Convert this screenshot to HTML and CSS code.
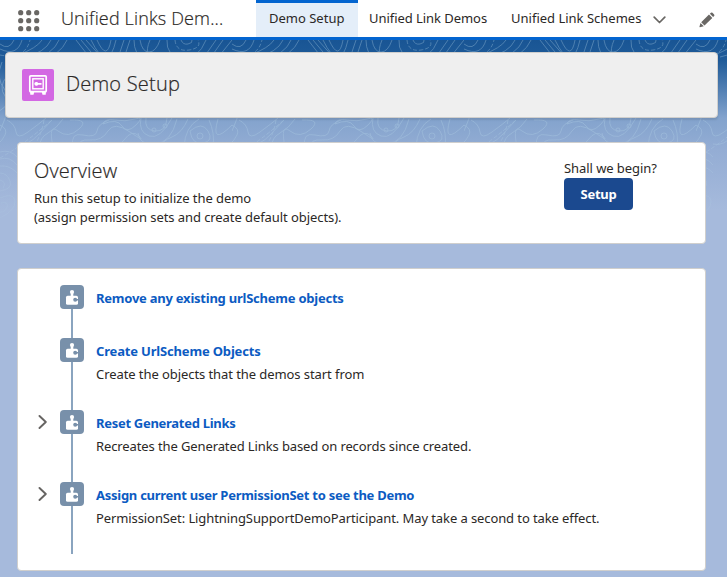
FILE: index.html
```html
<!DOCTYPE html>
<html lang="en">
<head>
<meta charset="utf-8">
<title>Demo Setup</title>
<link rel="stylesheet" href="styles.css">
</head>
<body>
<svg width="0" height="0" class="defs" aria-hidden="true">
  <symbol id="puzzle" viewBox="0 0 24 24"><rect x="6" y="10.800" width="12" height="9" rx="1.600" fill="#fff"/><path fill="#fff" d="M10.700 8h2.600v4h-2.600z"/><circle cx="12" cy="7" r="2.100" fill="#fff"/><circle cx="15.200" cy="14.700" r="2" fill="#7890aa"/><path fill="#7890aa" d="M15.500 13.900H19v1.700h-3.500z"/></symbol>
  <symbol id="chevron" viewBox="0 0 10 14"><path d="M1.500 1l6.300 6-6.300 6" fill="none" stroke="#666462" stroke-width="1.900" stroke-linecap="round" stroke-linejoin="round"/></symbol>
</svg>
<header class="nav">
  <svg class="launcher" width="22" height="22" viewBox="0 0 22 22" fill="#696764"><circle cx="2.700" cy="2.700" r="2.600"/><circle cx="10.700" cy="2.700" r="2.600"/><circle cx="18.700" cy="2.700" r="2.600"/><circle cx="2.700" cy="10.700" r="2.600"/><circle cx="10.700" cy="10.700" r="2.600"/><circle cx="18.700" cy="10.700" r="2.600"/><circle cx="2.700" cy="18.700" r="2.600"/><circle cx="10.700" cy="18.700" r="2.600"/><circle cx="18.700" cy="18.700" r="2.600"/></svg>
  <div class="app-name"><span class="t-app">Unified Links Dem...</span></div>
  <a class="tab tab-active"><span>Demo Setup</span></a>
  <a class="tab tab-demos"><span class="t-tab">Unified Link Demos</span></a>
  <a class="tab tab-schemes"><span>Unified Link Schemes</span></a>
  <svg class="more" width="13" height="8" viewBox="0 0 13 8"><path d="M1.200 1.200l5.300 5.300 5.300-5.300" fill="none" stroke="#696764" stroke-width="1.700" stroke-linecap="round" stroke-linejoin="round"/></svg>
  <svg class="edit" width="16" height="16" viewBox="0 0 16 16" fill="#696764"><path d="M2.200 10.300L10 2.600l3.300 3.300-7.800 7.700zM10.900 1.800l1-1q.8-.7 1.600 0l1.600 1.600q.8.800 0 1.600l-1 1zM1.500 11l3.300 3.300L.9 15.200q-.6 0-.4-.7z"/></svg>
</header>
<main class="page">
  <svg class="topo" width="727" height="189" aria-hidden="true">
    <defs>
      <pattern id="contours" width="232" height="190" patternUnits="userSpaceOnUse">
        <g fill="none" stroke="#b9d8ea" stroke-width=".9">
          <path d="M0 4q9 7 14-4M0 9q17 8 22-9M18 15Q37 8 42 0M24 17Q45 13 51 0M31 19Q53 15 59 0M39 20Q60 16 67 0"/>
          <path stroke-dasharray="4 2" d="M0 15q25 5 30-15M175 0q1 12 14 10t9-10"/>
          <path d="M76 0l14 18M81 0l15 18M86 0l16 18M91 0q17 35 25 0M97 0q10 22 14 0M118 18l6-18M124 18l6-18"/>
          <path d="M134 0q0 15 10 18M140 0q2 12 9 12t11-12M150 0q-8 19 8 18M167 0q-1 16 15 18t24-18M181 0q2 5 7 4t4-4M202 20l14-20M209 20l14-20M216 20l16-20"/>
          <path d="M2 22q-7 16 3 28t-7 22M7 36q-9 11-2 20T0 91"/>
          <path d="M0 85q8 4 5 10T-2 104M7 80q8 4 9 12t12 0 18-14M17 104q10 3 22-10t13-14"/>
          <path stroke-dasharray="4 2" d="M44 80q-2 14-10 26M0 118q22-12 52-38"/>
          <path d="M63 79q-6 9-15 14t-8 14M70 80q20-1 9 9T58 91t-5 16M73 107q-3-15 10-12t14-4 12-11M78 107q0-8 12-7t18-9 22 1 9 4-15 4-16 7"/>
          <path d="M103 84q2-6 12-4t20-1 1 6-14 1-19-2zM141 78q-3 14 8 18t23-18M146 78q-2 12 9 13t12-13M138 93q1 12 17 11t22-25"/>
          <circle cx="154" cy="90" r="2"/><circle cx="165" cy="86" r="2"/><circle cx="200" cy="96" r="3"/>
          <path d="M188 79q-6 14-16 18t-12 10M199 79q-14 8-15 28M190 91q12-10 18 0t-5 12-13-12M209 80q6 13 4 27M218 79q-8 28 14 6"/>
          <path d="M232 22q-18 9-16 24t20 16M228 29q-8 6-6 15t10 11"/>
          <path d="M0 112q10-3 17 5M0 119q10-3 17 6M0 126q10-1 17 7M0 133q7 0 10 8T0 151M0 140q7 2 3 8M0 158q14-6 15 3T0 178M1 163q8-2 6 4t-7 5M232 128q-26-10-27 8t27 10M232 134q-18-7-20 2t20 3M232 157q-19-8-21 4t21 17"/>
        </g>
      </pattern>
      <linearGradient id="fade" x1="0" y1="0" x2="0" y2="1"><stop offset=".4" stop-color="#fff" stop-opacity=".36"/><stop offset="1" stop-color="#fff" stop-opacity=".1"/></linearGradient>
      <mask id="faded"><rect width="727" height="189" fill="url(#fade)"/></mask>
    </defs>
    <rect width="727" height="189" fill="url(#contours)" mask="url(#faded)"/>
  </svg>
  <section class="card page-header">
    <svg class="safe" width="32" height="32" viewBox="0 0 32 32"><rect width="32" height="32" rx="2" fill="#d368e3"/><rect x="7.800" y="6.800" width="16.400" height="15.900" rx="1" fill="none" stroke="#fff" stroke-width="1.700"/><path fill="#fff" d="M8 22h4.500l-1 3.700H8.300zM19.500 22H24l-.3 3.700h-3.200z"/><rect x="10.800" y="9.800" width="10.400" height="10" fill="none" stroke="#fff" stroke-width="1.400"/><path fill="#fff" d="M12.300 14.800a2.100 2.100 0 0 1 3.900-.8h3.300v1.700h-3.300a2.100 2.100 0 0 1-3.900-.9z"/></svg>
    <h1 class="title"><span class="t-title">Demo Setup</span></h1>
  </section>
  <section class="card overview">
    <div class="overview-text">
      <h2 class="heading"><span class="t-over">Overview</span></h2>
      <p><span class="t-run">Run this setup to initialize the demo</span><br><span class="t-assign">(assign permission sets and create default objects).</span></p>
    </div>
    <div class="begin"><span class="t-shall">Shall we begin?</span><button class="button"><span class="t-btn">Setup</span></button></div>
  </section>
  <section class="card steps">
    <div class="step short">
      <span class="toggle"></span>
      <div class="rail"><svg class="icon"><use href="#puzzle"/></svg></div>
      <div class="body"><a class="t-s1">Remove any existing urlScheme objects</a></div>
    </div>
    <div class="step">
      <span class="toggle"></span>
      <div class="rail"><svg class="icon"><use href="#puzzle"/></svg></div>
      <div class="body"><a class="t-s2">Create UrlScheme Objects</a><p><span class="t-d2">Create the objects that the demos start from</span></p></div>
    </div>
    <div class="step">
      <span class="toggle"><svg width="10" height="14"><use href="#chevron"/></svg></span>
      <div class="rail"><svg class="icon"><use href="#puzzle"/></svg></div>
      <div class="body"><a class="t-s3">Reset Generated Links</a><p><span class="t-d3">Recreates the Generated Links based on records since created.</span></p></div>
    </div>
    <div class="step">
      <span class="toggle"><svg width="10" height="14"><use href="#chevron"/></svg></span>
      <div class="rail"><svg class="icon"><use href="#puzzle"/></svg></div>
      <div class="body"><a class="t-s4">Assign current user PermissionSet to see the Demo</a><p><span class="t-d4">PermissionSet: LightningSupportDemoParticipant. May take a second to take effect.</span></p></div>
    </div>
  </section>
</main>
</body>
</html>
```
FILE: styles.css
```css
* { box-sizing: border-box; }
body { margin: 0; height: 577px; overflow: hidden; font: 13px/19px "Noto Sans", sans-serif; color: #2b2826; background: #a6badc; }
p, h1, h2 { margin: 0; font-weight: 400; }
span, a { white-space: nowrap; }
.defs { position: absolute; }
.nav { height: 40px; display: flex; background: #fff; border-bottom: 3px solid #0365d0; }
.launcher { margin: 10px 0 0 18px; flex: none; }
.app-name { width: 195px; margin-left: 21px; font: 300 18px/37px "Open Sans", sans-serif; -webkit-text-stroke: .2px; }
.tab { height: 37px; line-height: 37px; flex: none; }
.tab-active { width: 102px; padding-left: 13px; background: #e4eef9; border-top: 3px solid #0365d0; line-height: 31px; }
.tab-demos { width: 142px; padding-left: 11px; }
.tab-schemes { width: 153px; padding-left: 11px; }
.more { margin-top: 16px; flex: none; }
.edit { margin: 12px 0 0 33px; flex: none; }
.page { position: relative; height: 537px; padding: 12px 9px 0 5px; background: linear-gradient(#195594 0, #1f5b99 20px, #83a3cd 78px, #94add4 110px, #a6badc 170px); }
.topo { position: absolute; left: 0; top: 0; }
.card { position: relative; background: #fff; border: 1px solid #d0cfcd; border-radius: 4px; }
.page-header { height: 66px; padding: 16px; display: flex; background: #efefef; box-shadow: 0 2px 2px rgba(0,0,0,.1); }
.title { margin-left: 12px; font: 300 20px/30px "Open Sans", sans-serif; -webkit-text-stroke: .2px; }
.overview { height: 102px; margin: 24px 12px 0; padding: 16px; display: flex; }
.overview-text { width: 530px; flex: none; }
.heading { height: 30px; font: 300 20px/23px "Open Sans", sans-serif; -webkit-text-stroke: .2px; }
.begin { display: flex; flex-direction: column; }
.button { width: 69px; height: 32px; padding: 0; border: 0; border-radius: 4px; background: #1b498f; color: #fff; font: 700 13px/30px "Noto Sans", sans-serif; }
.steps { height: 303px; margin: 24px 12px 0; padding: 16px 16px 0; }
.step { display: flex; height: 72px; }
.step.short { height: 53px; }
.toggle { width: 26px; padding: 5px 0 0 4px; }
.toggle svg, .icon { display: block; }
.rail { width: 24px; background: linear-gradient(#8aa4bf, #8aa4bf) 11px 0 / 2px 100% no-repeat; }
.icon { width: 24px; height: 24px; border-radius: 4px; background: #7890aa; }
.body { padding: 4px 0 0 12px; }
.body a { display: block; width: max-content; color: #0c5bc2; font-weight: 700; }
.body p { margin-top: 4px; }
.t-app { letter-spacing: .15px; }
.t-tab { letter-spacing: -.05px; }
.t-title { letter-spacing: .2px; }
.t-over { letter-spacing: .1px; }
.t-run { letter-spacing: -.055px; }
.t-assign { letter-spacing: -.075px; }
.t-shall { letter-spacing: -.07px; }
.t-btn { letter-spacing: -.25px; }
.t-s1 { letter-spacing: -.235px; }
.t-s2 { letter-spacing: -.17px; }
.t-s3 { letter-spacing: -.29px; }
.t-s4 { letter-spacing: -.265px; }
.t-d2 { letter-spacing: -.075px; }
.t-d3 { letter-spacing: -.11px; }
.t-d4 { letter-spacing: -.095px; }
```
